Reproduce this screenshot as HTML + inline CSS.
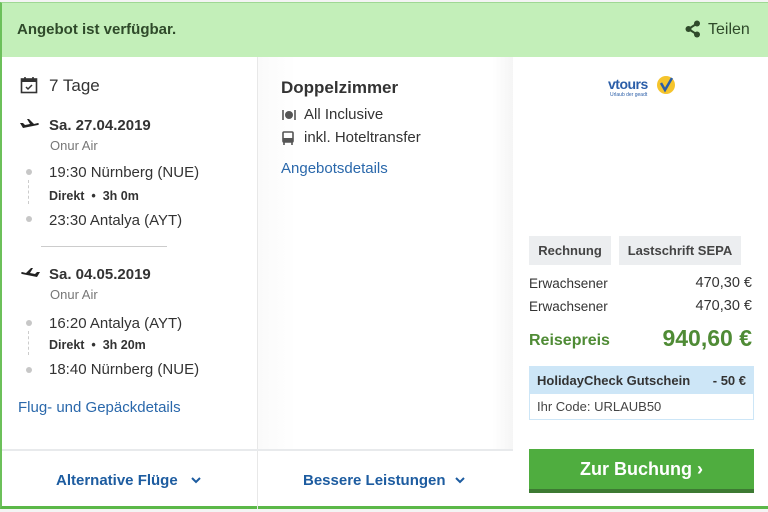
<!DOCTYPE html>
<html><head><meta charset="utf-8"><style>
*{box-sizing:border-box;margin:0;padding:0}
body{width:768px;height:512px;background:#f4f4f4;font-family:"Liberation Sans",sans-serif;color:#333;position:relative;overflow:hidden}
.card{position:absolute;left:0;top:2px;width:768px;height:507px;background:#fff;border-left:2px solid #6cc05a;border-top:1px solid #9fd894;border-bottom:3px solid #5bb848}
.hdr{position:absolute;left:0;top:0;width:100%;height:54px;background:#c3efb9;color:#2f4a2a;font-size:15px;font-weight:bold}
.a{position:absolute;white-space:nowrap}
.blue{color:#2a68ab}
.mid{position:absolute;left:255px;top:54px;width:256px;height:392px;background:linear-gradient(90deg,#fafafa,#fff 15%,#fff 92%,#f5f5f5);border-left:1px solid #e8e8e8}
.bot{position:absolute;left:0;top:446px;width:511px;height:58px;border-top:2px solid #e8eaec;font-weight:bold;color:#1d5ca0;font-size:15px}
.dot{position:absolute;width:6px;height:6px;border-radius:3px;background:#c7c7c7}
.tag{position:absolute;top:233px;height:29px;background:#eceef0;font-size:13px;font-weight:bold;color:#444;line-height:29px;text-align:center}
</style></head><body>
<div class="card">
<div class="hdr"><span class="a" style="left:15px;top:18px">Angebot ist verfügbar.</span>
<svg class="a" style="left:683px;top:17px" width="16" height="18" viewBox="0 0 16 18"><circle cx="12" cy="3.5" r="3" fill="#2f4a2a"/><circle cx="3.5" cy="9" r="3" fill="#2f4a2a"/><circle cx="12" cy="14.5" r="3" fill="#2f4a2a"/><path d="M12 3.5L3.5 9 12 14.5" stroke="#2f4a2a" stroke-width="2" fill="none"/></svg>
<span class="a" style="left:706px;top:18px;font-weight:normal;font-size:16px">Teilen</span></div>

<svg class="a" style="left:18px;top:73px" width="18" height="18" viewBox="0 0 18 18"><rect x="1.5" y="3" width="15" height="13.5" fill="none" stroke="#333" stroke-width="1.6"/><rect x="1.5" y="3" width="15" height="3" fill="#333"/><path d="M5 1v4M13 1v4" stroke="#333" stroke-width="1.6"/><path d="M6 11l2 2 4-4" stroke="#333" stroke-width="1.5" fill="none"/></svg>
<span class="a" style="left:47px;top:73px;font-size:17px">7 Tage</span>

<svg class="a" style="left:17px;top:116px" width="22" height="12" viewBox="0 0 22 12"><path d="M1 4l3 0 2 2 5-1-3-5h2l5 5 4-1c1 0 1 2 0 2L4 9z" fill="#222"/></svg>
<span class="a" style="left:47px;top:114px;font-size:15px;font-weight:bold">Sa. 27.04.2019</span>
<span class="a" style="left:48px;top:135px;font-size:13px;color:#777">Onur Air</span>
<div class="dot" style="left:24px;top:166px"></div>
<div class="a" style="left:26px;top:177px;height:24px;border-left:1px dashed #ccc"></div>
<div class="dot" style="left:24px;top:213px"></div>
<span class="a" style="left:47px;top:161px;font-size:15px">19:30 Nürnberg (NUE)</span>
<span class="a" style="left:47px;top:186px;font-size:12.5px;font-weight:bold">Direkt &nbsp;•&nbsp; 3h 0m</span>
<span class="a" style="left:47px;top:209px;font-size:15px">23:30 Antalya (AYT)</span>
<div class="a" style="left:39px;top:243px;width:126px;border-top:1px solid #ccc"></div>

<svg class="a" style="left:17px;top:265px" width="22" height="12" viewBox="0 0 22 12"><path d="M21 4l-3 0-2 2-5-1 3-5h-2l-5 5-4-1c-1 0-1 2 0 2L18 9z" fill="#222"/></svg>
<span class="a" style="left:47px;top:263px;font-size:15px;font-weight:bold">Sa. 04.05.2019</span>
<span class="a" style="left:48px;top:284px;font-size:13px;color:#777">Onur Air</span>
<div class="dot" style="left:24px;top:317px"></div>
<div class="a" style="left:26px;top:328px;height:24px;border-left:1px dashed #ccc"></div>
<div class="dot" style="left:24px;top:364px"></div>
<span class="a" style="left:47px;top:312px;font-size:15px">16:20 Antalya (AYT)</span>
<span class="a" style="left:47px;top:335px;font-size:12.5px;font-weight:bold">Direkt &nbsp;•&nbsp; 3h 20m</span>
<span class="a" style="left:47px;top:358px;font-size:15px">18:40 Nürnberg (NUE)</span>
<span class="a blue" style="left:16px;top:396px;font-size:15px">Flug- und Gepäckdetails</span>

<div class="mid">
<span class="a" style="left:23px;top:21px;font-size:17px;font-weight:bold;color:#333">Doppelzimmer</span>
<svg class="a" style="left:24px;top:52px" width="14" height="12" viewBox="0 0 14 12"><circle cx="7" cy="6" r="4" fill="#555"/><path d="M1 1v10M13 1v10" stroke="#555" stroke-width="1.6"/></svg>
<span class="a" style="left:46px;top:49px;font-size:15px">All Inclusive</span>
<svg class="a" style="left:24px;top:74px" width="12" height="14" viewBox="0 0 12 14"><rect x="1" y="1" width="10" height="10" rx="1" fill="none" stroke="#555" stroke-width="1.6"/><rect x="1" y="7" width="10" height="4" fill="#555"/><path d="M2 11v3M10 11v3" stroke="#555" stroke-width="1.6"/></svg>
<span class="a" style="left:46px;top:72px;font-size:15px">inkl. Hoteltransfer</span>
<span class="a blue" style="left:23px;top:103px;font-size:15px">Angebotsdetails</span>
</div>

<div class="bot">
<div class="a" style="left:255px;top:0;height:58px;border-left:1px solid #e8e8e8"></div>
<span class="a" style="left:54px;top:21px">Alternative Flüge</span>
<svg class="a" style="left:189px;top:26px" width="10" height="7" viewBox="0 0 10 7"><path d="M1 1l4 4 4-4" stroke="#1d5ca0" stroke-width="2" fill="none"/></svg>
<span class="a" style="left:301px;top:21px">Bessere Leistungen</span>
<svg class="a" style="left:453px;top:26px" width="10" height="7" viewBox="0 0 10 7"><path d="M1 1l4 4 4-4" stroke="#1d5ca0" stroke-width="2" fill="none"/></svg>
</div>

<span class="a" style="left:606px;top:73px;font-size:14px;font-weight:bold;color:#2b5ea8;letter-spacing:-0.5px">vtours</span>
<span class="a" style="left:608px;top:89px;font-size:5px;color:#2b5ea8">Urlaub der geadt</span>
<svg class="a" style="left:654px;top:72px" width="20" height="20" viewBox="0 0 20 20"><circle cx="10" cy="10" r="9" fill="#f5c42c"/><path d="M5 8l4 7 7-12" stroke="#2b5ea8" stroke-width="2.5" fill="none"/></svg>

<div class="tag" style="left:527px;width:82px">Rechnung</div>
<div class="tag" style="left:617px;width:122px">Lastschrift SEPA</div>
<span class="a" style="left:527px;top:273px;font-size:13.5px">Erwachsener</span>
<span class="a" style="right:16px;top:272px;font-size:14.5px">470,30 €</span>
<span class="a" style="left:527px;top:296px;font-size:13.5px">Erwachsener</span>
<span class="a" style="right:16px;top:295px;font-size:14.5px">470,30 €</span>
<span class="a" style="left:527px;top:329px;font-size:16px;font-weight:bold;color:#4f8b35">Reisepreis</span>
<span class="a" style="right:16px;top:322px;font-size:23px;font-weight:bold;color:#4f8b35">940,60 €</span>
<div class="a" style="left:527px;top:363px;width:225px;height:54px;border:1px solid #cde6f7">
<div style="height:27px;background:#cde6f7;font-size:13px;font-weight:bold;line-height:27px;padding:0 7px;color:#333">HolidayCheck Gutschein<span style="float:right">- 50 €</span></div>
<div style="font-size:13px;line-height:25px;padding:0 7px;color:#444">Ihr Code: URLAUB50</div></div>
<div class="a" style="left:527px;top:446px;width:225px;height:44px;background:#4fad3f;border-bottom:4px solid #3d7a33;color:#fff;font-size:18px;font-weight:bold;text-align:center;line-height:41px">Zur Buchung ›</div>
</div>
</body></html>
